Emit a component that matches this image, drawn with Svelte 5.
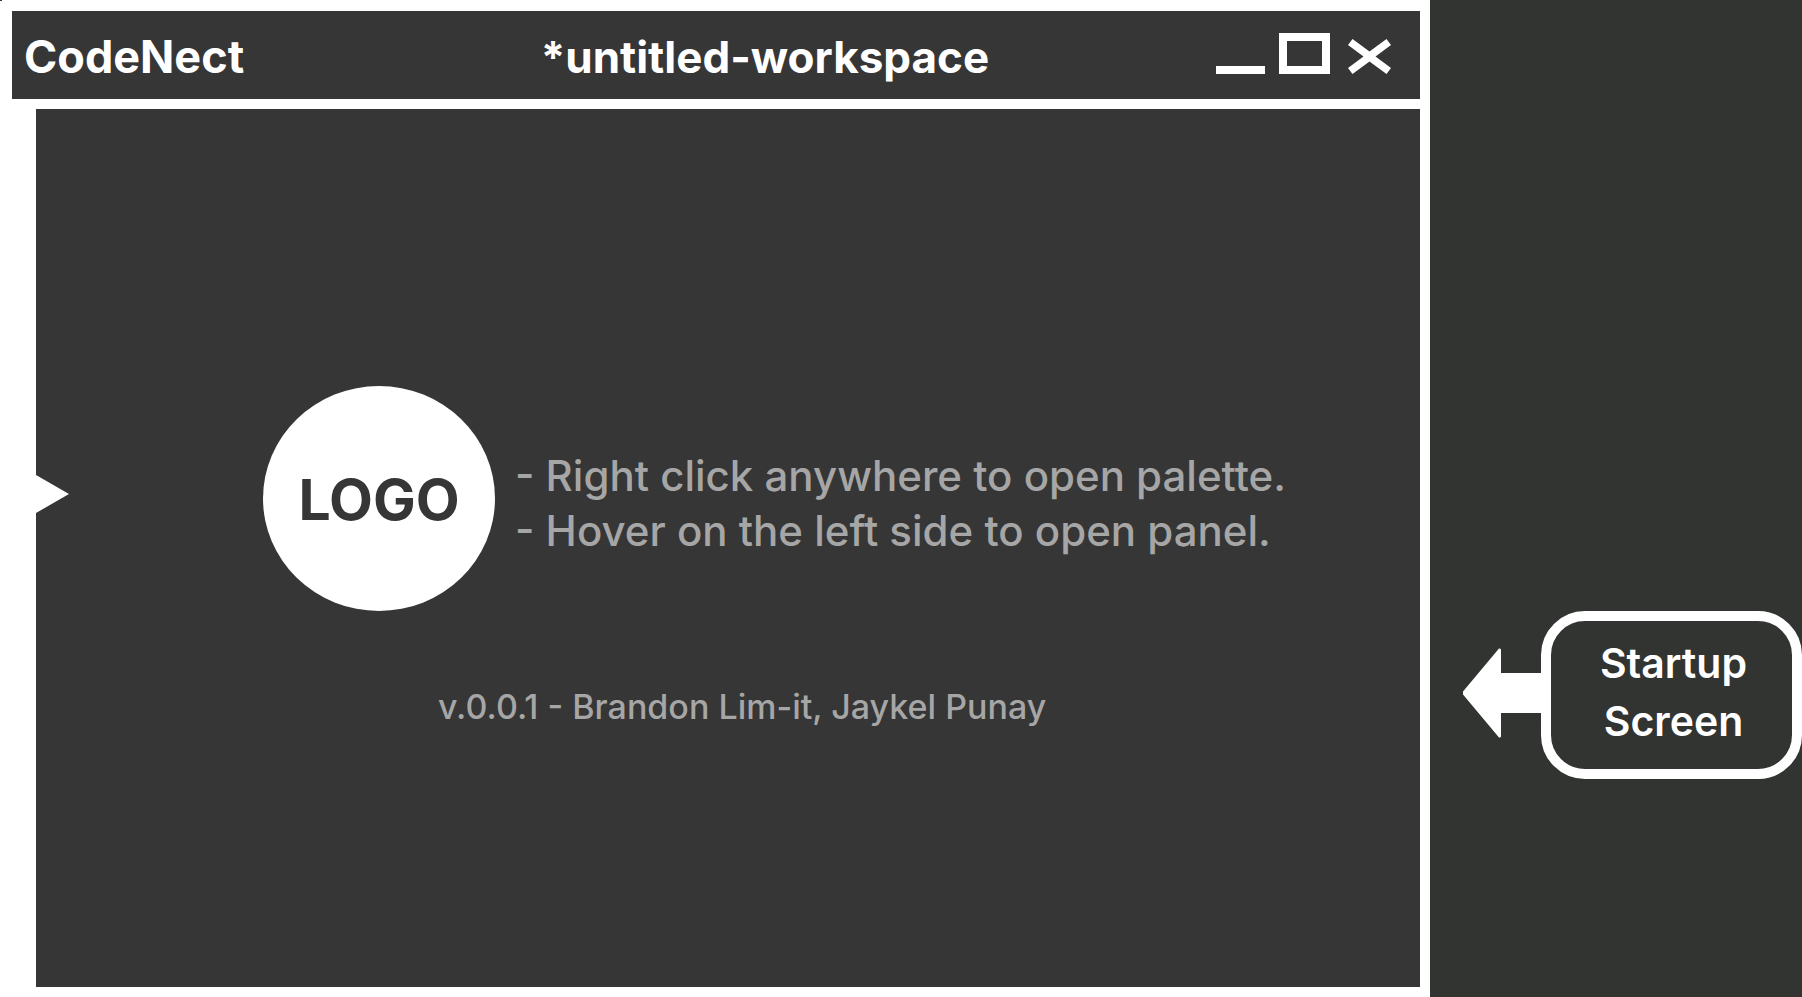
<script>
  const product = 'CodeNect';
  const workspace = '*untitled-workspace';
  const hints = [
    '- Right click anywhere to open palette.',
    '- Hover on the left side to open panel.'
  ];
  const credits = 'v.0.0.1 - Brandon Lim-it, Jaykel Punay';
</script>

<div class="page">
  <div class="window">
    <span class="speck"></span>
    <header class="titlebar">
      <span class="product">{product}</span>
      <h1 class="workspace">{workspace}</h1>
      <div class="controls">
        <button aria-label="Minimize">
          <svg width="49" height="41" viewBox="0 0 49 41"><path d="M0 33h49v8H0z" /></svg>
        </button>
        <button aria-label="Maximize">
          <svg width="51" height="41" viewBox="0 0 51 41"><path d="M0 0h51v41H0zM8 8v25h35V8z" fill-rule="evenodd" /></svg>
        </button>
        <button class="close" aria-label="Close">
          <svg width="43" height="35" viewBox="0 0 43 35">
            <path d="M4.500 0 21.500 12.500 38.500 0 43 6 27.500 17.500 43 29 38.500 35 21.500 22.500 4.500 35 0 29 15.500 17.500 0 6z" />
          </svg>
        </button>
      </div>
    </header>

    <main class="canvas">
      <div class="welcome">
        <button class="handle" aria-label="Open panel">
          <svg width="33" height="38" viewBox="0 0 33 38"><path d="M0 0 33 19 0 38z" /></svg>
        </button>
        <div class="logo">LOGO</div>
        <ul class="hints">
          {#each hints as hint}
            <li>{hint}</li>
          {/each}
        </ul>
      </div>
      <p class="credits">{credits}</p>
    </main>
  </div>

  <aside class="notes">
    <svg class="arrow" width="78" height="90" viewBox="0 0 78 90">
      <path d="M0 43.500 36 .5Q38 0 38 2V25H78V65H38V88Q38 90 36 89.500L0 46.500z" />
    </svg>
    <p class="label">Startup<br />Screen</p>
  </aside>
</div>

<style>
  :global(body) {
    background: #323431;
  }

  .page {
    display: grid;
    grid-template-columns: minmax(0, 1fr) 372px;
    min-height: 100vh;
    font-family: Inter, 'Open Sans', sans-serif;
    color: #fff;
    background: #323431;
  }

  .window {
    position: relative;
    box-sizing: border-box;
    display: flex;
    flex-direction: column;
    gap: 10px;
    padding: 11px 10px 10px 12px;
    background: #fff;
  }

  .speck {
    position: absolute;
    top: 0;
    left: 0;
    width: 2px;
    height: 1px;
    background: #363636;
  }

  .titlebar {
    display: grid;
    grid-template-columns: 9fr auto 7fr;
    align-items: center;
    height: 88px;
    box-sizing: border-box;
    padding: 4px 29px 0 12px;
    background: #363636;
    font-size: 44px;
    line-height: 56px;
    font-weight: 700;
  }

  .product {
    font-size: 45px;
  }

  .workspace {
    margin: 0;
    font: inherit;
  }

  .controls {
    display: flex;
    justify-content: flex-end;
    align-items: flex-end;
    gap: 14px;
    margin-bottom: 7px;
  }

  button {
    display: block;
    margin: 0;
    padding: 0;
    border: 0;
    background: none;
    cursor: pointer;
  }

  svg {
    display: block;
    fill: #fff;
  }

  .close {
    margin-left: 4px;
  }

  .canvas {
    flex: 1;
    margin-left: 24px;
    background: #363636;
    color: #a6a6a6;
  }

  .welcome {
    display: flex;
    align-items: center;
    padding-top: 277px;
  }

  .handle {
    margin: 0 194px 10px 0;
  }

  .logo {
    display: grid;
    place-items: center;
    flex: none;
    box-sizing: border-box;
    width: 232px;
    height: 225px;
    padding-top: 2px;
    border-radius: 50%;
    background: #fff;
    color: #363636;
    font-size: 57px;
    font-weight: 700;
  }

  .hints {
    margin: 8px 0 0 20px;
    padding: 0;
    list-style: none;
    font-size: 42px;
    line-height: 55px;
    font-weight: 500;
    white-space: nowrap;
  }

  .credits {
    margin: 76px 0 0 402px;
    font-size: 34px;
    line-height: 40px;
    font-weight: 500;
    white-space: nowrap;
  }

  .notes {
    display: flex;
    align-items: center;
    align-self: start;
    margin-top: 611px;
    padding-left: 33px;
  }

  .arrow {
    flex: none;
    margin-bottom: 4px;
  }

  .label {
    flex: 1;
    box-sizing: border-box;
    height: 168px;
    margin: 0;
    padding: 13px 0 0 4px;
    border: 10px solid #fff;
    border-radius: 44px;
    text-align: center;
    font-size: 41px;
    line-height: 58px;
    font-weight: 600;
  }
</style>
